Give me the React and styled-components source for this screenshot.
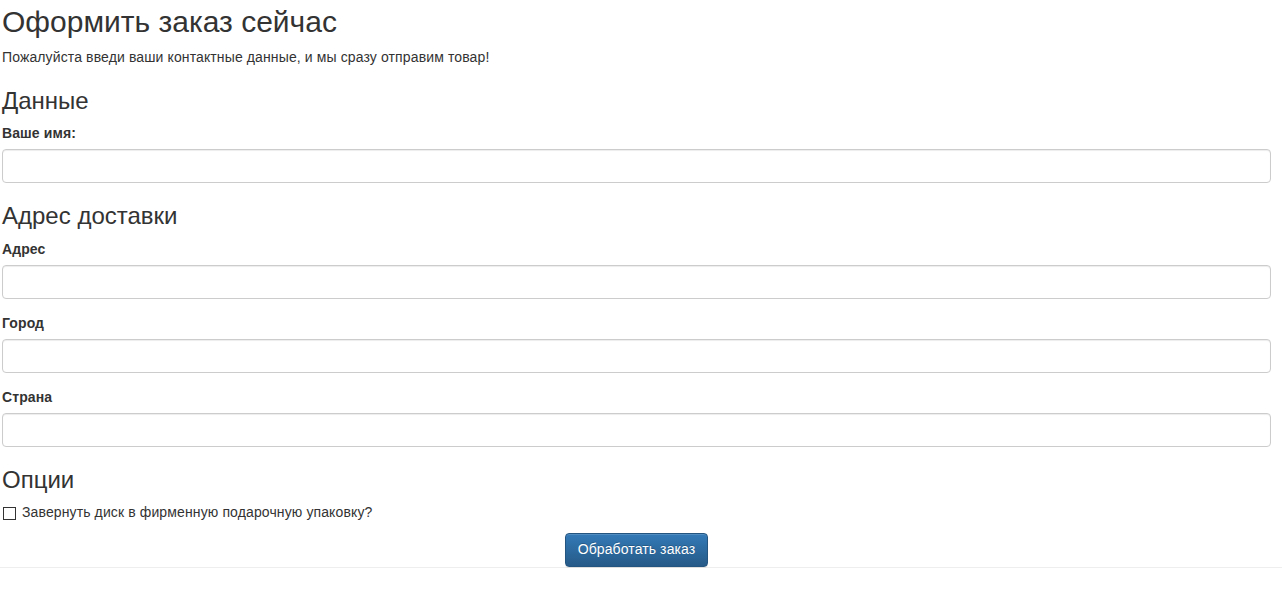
import React from "react"
import styled, { createGlobalStyle } from 'styled-components'

const GlobalStyle = createGlobalStyle`
  html, body {
    margin: 0;
    background: #fff;
  }
  body {
    font-family: "Liberation Sans", Arial, Helvetica, sans-serif;
    font-size: 14px;
    line-height: 1.428571;
    color: #333;
  }
  * {
    box-sizing: border-box;
  }
`

const Page = styled.div`
  padding: 5px 11px 0 2px;
  border-bottom: 1px solid #eeeeee;
`

const Title = styled.h2`
  font-size: 30px;
  font-weight: 500;
  line-height: 1.1;
  margin: 0 0 10px;
`

const Lead = styled.p`
  margin: 0 0 10px;
  letter-spacing: 0.12px;
`

const Section = styled.h3`
  font-size: 24px;
  font-weight: 500;
  line-height: 1.1;
  margin: 20px 0 10px;
`

const Group = styled.div`
  margin-bottom: 15px;
`

const Label = styled.label`
  display: inline-block;
  max-width: 100%;
  margin-bottom: 5px;
  font-weight: bold;
  letter-spacing: 0.1px;
`

const Input = styled.input`
  display: block;
  width: 100%;
  height: 34px;
  padding: 6px 12px;
  font-family: inherit;
  font-size: 14px;
  color: #555;
  background: #fff;
  border: 1px solid #ccc;
  border-radius: 4px;
  box-shadow: inset 0 1px 1px rgba(0, 0, 0, .075);
  outline: none;
`

const CheckRow = styled.div`
  margin: 10px 0;
`

const CheckLabel = styled.label`
  display: flex;
  align-items: center;
  height: 20px;
  font-weight: normal;
  letter-spacing: 0.12px;
  cursor: pointer;
`

const Box = styled.input`
  appearance: none;
  flex: none;
  width: 13px;
  height: 13px;
  margin: 1px 6px 0 1px;
  border: 1px solid #333;
  background: #fff;
  border-radius: 0;
`

const Actions = styled.div`
  text-align: center;
`

const Button = styled.button`
  display: inline-block;
  height: 34px;
  padding: 6px 12px;
  font-family: inherit;
  font-size: 14px;
  line-height: 1.428571;
  letter-spacing: 0.1px;
  color: #fff;
  border: 1px solid #245580;
  border-radius: 4px;
  background-image: linear-gradient(to bottom, #337ab7 0, #265a88 100%);
  text-shadow: 0 -1px 0 rgba(0, 0, 0, .2);
  box-shadow: inset 0 1px 0 rgba(255, 255, 255, .15), 0 1px 1px rgba(0, 0, 0, .075);
  vertical-align: top;
  cursor: pointer;
`

const fields = [
  { id: "line1", label: "Адрес" },
  { id: "city", label: "Город" },
  { id: "country", label: "Страна" },
]

export default function App() {
  return (
    <>
      <GlobalStyle />
      <Page>
        <Title>Оформить заказ сейчас</Title>
        <Lead>Пожалуйста введи ваши контактные данные, и мы сразу отправим товар!</Lead>
        <form onSubmit={e => e.preventDefault()}>
          <Section>Данные</Section>
          <Group>
            <Label htmlFor="name">Ваше имя:</Label>
            <Input id="name" />
          </Group>
          <Section>Адрес доставки</Section>
          {fields.map(f => (
            <Group key={f.id}>
              <Label htmlFor={f.id}>{f.label}</Label>
              <Input id={f.id} />
            </Group>
          ))}
          <Section>Опции</Section>
          <CheckRow>
            <CheckLabel>
              <Box type="checkbox" />
              Завернуть диск в фирменную подарочную упаковку?
            </CheckLabel>
          </CheckRow>
          <Actions>
            <Button type="submit">Обработать заказ</Button>
          </Actions>
        </form>
      </Page>
    </>
  )
}
